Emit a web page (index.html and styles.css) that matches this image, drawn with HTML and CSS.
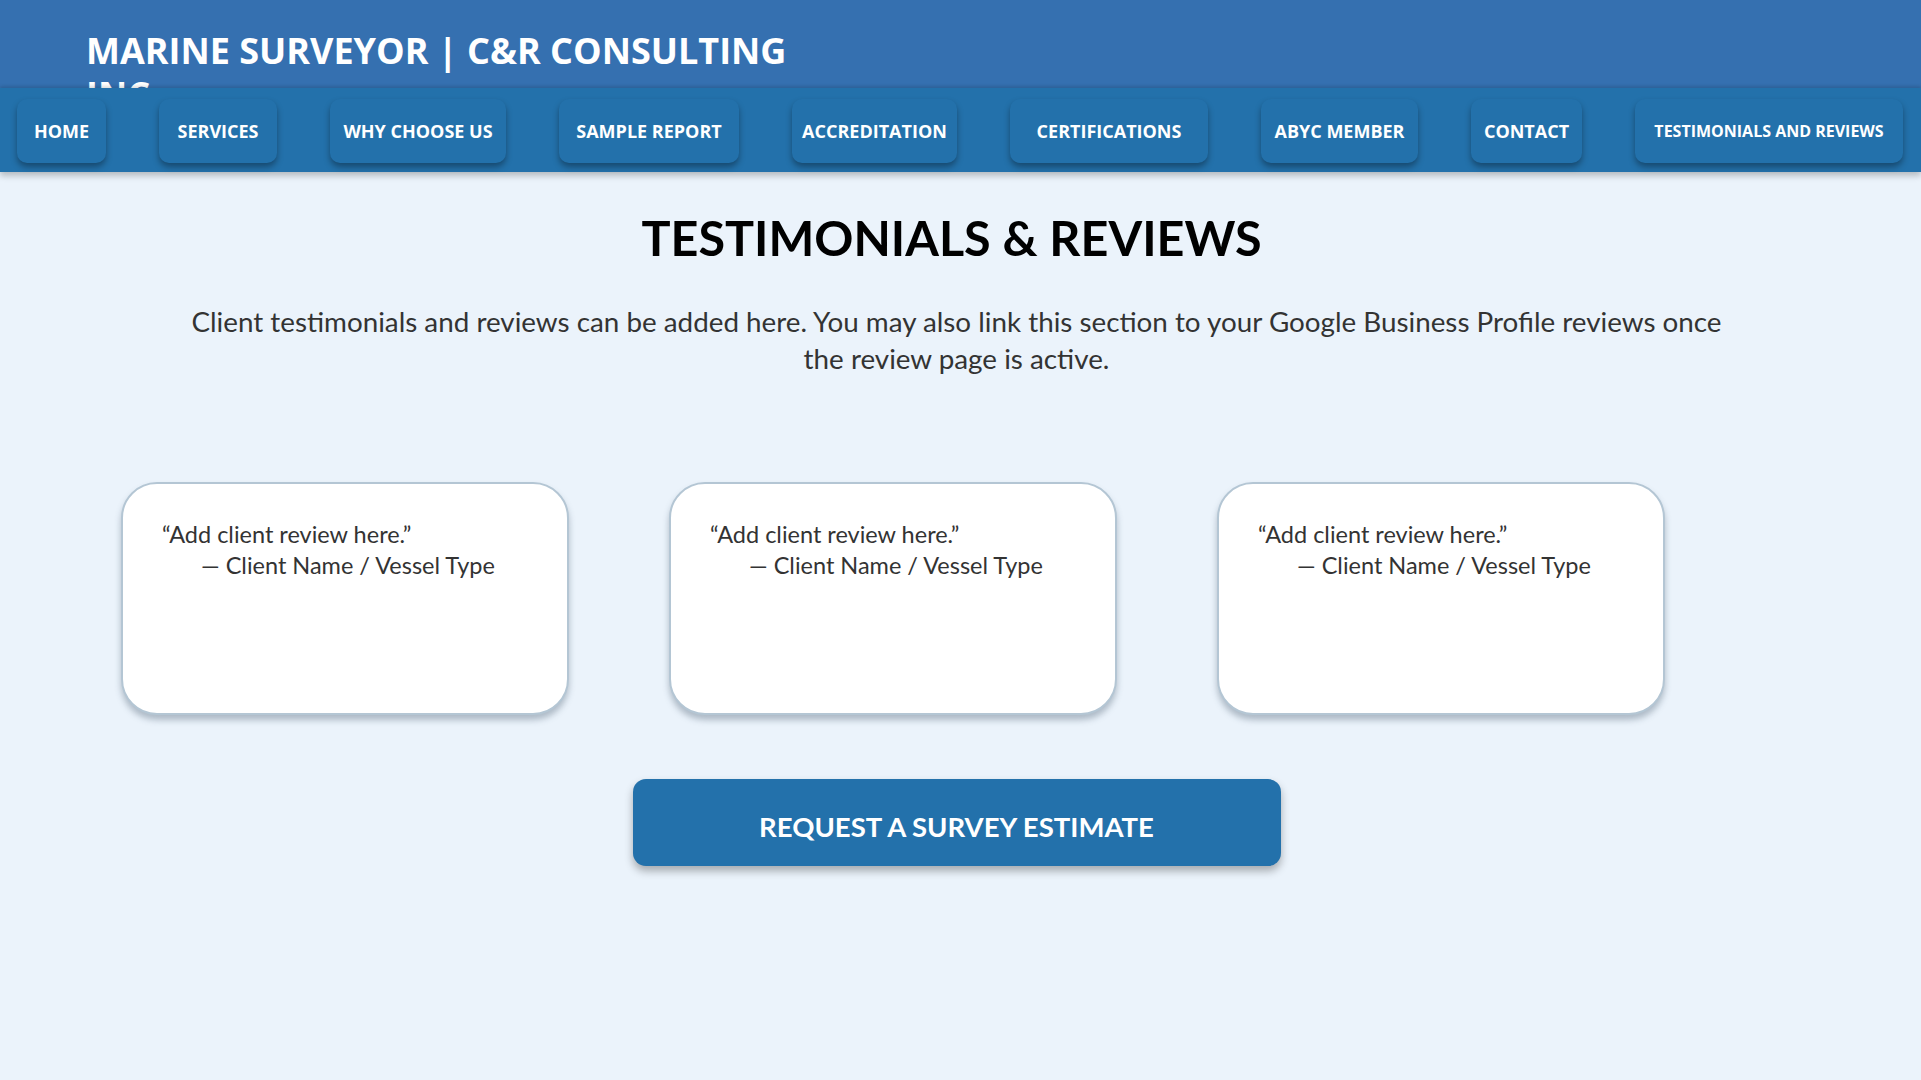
FILE: index.html
```html
<!DOCTYPE html>
<html lang="en">
<head>
<meta charset="utf-8">
<title>Testimonials &amp; Reviews</title>
<link rel="stylesheet" href="styles.css">
</head>
<body>
<header class="site-header">
  <h1 class="site-title">MARINE SURVEYOR | C&amp;R CONSULTING INC.</h1>
</header>
<nav class="main-nav">
  <a class="nav-btn" href="#">HOME</a>
  <a class="nav-btn" href="#">SERVICES</a>
  <a class="nav-btn" href="#">WHY CHOOSE US</a>
  <a class="nav-btn" href="#">SAMPLE REPORT</a>
  <a class="nav-btn" href="#">ACCREDITATION</a>
  <a class="nav-btn" href="#">CERTIFICATIONS</a>
  <a class="nav-btn" href="#">ABYC MEMBER</a>
  <a class="nav-btn" href="#">CONTACT</a>
  <a class="nav-btn nav-btn-small" href="#">TESTIMONIALS AND REVIEWS</a>
</nav>
<main class="content">
  <h2 class="page-title">TESTIMONIALS &amp; REVIEWS</h2>
  <p class="intro">Client testimonials and reviews can be added here. You may also link this section to your Google Business Profile reviews once the review page is active.</p>
  <section class="cards">
    <div class="card">
      <p class="quote">“Add client review here.”</p>
      <p class="author">— Client Name / Vessel Type</p>
    </div>
    <div class="card">
      <p class="quote">“Add client review here.”</p>
      <p class="author">— Client Name / Vessel Type</p>
    </div>
    <div class="card">
      <p class="quote">“Add client review here.”</p>
      <p class="author">— Client Name / Vessel Type</p>
    </div>
  </section>
  <div class="cta-wrap">
    <a class="cta" href="#">REQUEST A SURVEY ESTIMATE</a>
  </div>
</main>
</body>
</html>
```
FILE: styles.css
```css
* { box-sizing: border-box; }

html, body {
  margin: 0;
  padding: 0;
}

body {
  background: #ebf3fb;
  font-family: Lato, "Open Sans", "Liberation Sans", sans-serif;
  min-height: 1080px;
}

.site-header {
  background: #3570b0;
  height: 88px;
  overflow: hidden;
  padding: 29px 0 0 86px;
}

.site-title {
  margin: 0;
  width: 740px;
  font-family: "Open Sans", "Liberation Sans", sans-serif;
  font-weight: 700;
  font-size: 36px;
  line-height: 44px;
  color: #ffffff;
}

.main-nav {
  position: relative;
  background: #2371ab;
  height: 84px;
  padding: 11px 18px 9px 17px;
  display: flex;
  justify-content: space-between;
  align-items: center;
  box-shadow: 0 -2px 3px rgba(0, 0, 0, 0.12), 0 4px 6px rgba(0, 0, 0, 0.22);
}

.nav-btn {
  height: 64px;
  display: flex;
  align-items: center;
  justify-content: center;
  background: #2371ab;
  border-radius: 10px;
  box-shadow: 0 4px 6px rgba(0, 0, 0, 0.35);
  color: #ffffff;
  text-decoration: none;
  font-family: "Open Sans", "Liberation Sans", sans-serif;
  font-weight: 700;
  font-size: 18px;
  white-space: nowrap;
}

.nav-btn:nth-child(1) { width: 89px; }
.nav-btn:nth-child(2) { width: 118px; }
.nav-btn:nth-child(3) { width: 176px; }
.nav-btn:nth-child(4) { width: 180px; }
.nav-btn:nth-child(5) { width: 165px; }
.nav-btn:nth-child(6) { width: 198px; }
.nav-btn:nth-child(7) { width: 157px; }
.nav-btn:nth-child(8) { width: 111px; }
.nav-btn:nth-child(9) { width: 268px; }

.nav-btn-small {
  font-size: 16px;
}

.content {
  padding: 35px 8px 0 0;
}

.page-title {
  margin: 0;
  padding-right: 10px;
  text-align: center;
  font-family: Lato, sans-serif;
  font-weight: 700;
  font-size: 48.5px;
  line-height: 60px;
  color: #000000;
}

.intro {
  margin: 36px auto 0;
  max-width: 1545px;
  text-align: center;
  font-family: Lato, sans-serif;
  font-size: 27.8px;
  line-height: 37px;
  color: #333333;
}

.cards {
  display: flex;
  gap: 100px;
  padding-left: 121px;
  margin-top: 105px;
}

.card {
  width: 448px;
  height: 233px;
  background: #ffffff;
  border: 2px solid #b4c6d4;
  border-radius: 36px;
  box-shadow: 0 5px 6px rgba(60, 80, 100, 0.35);
  padding: 35px 20px 0 39px;
}

.quote, .author {
  margin: 0;
  font-family: Lato, sans-serif;
  font-size: 23.5px;
  line-height: 31px;
  color: #333333;
}

.author {
  padding-left: 39px;
}

.cta-wrap {
  display: flex;
  justify-content: center;
  margin-top: 64px;
}

.cta {
  width: 648px;
  height: 87px;
  display: flex;
  align-items: center;
  justify-content: center;
  padding-top: 8px;
  background: #2371ab;
  border-radius: 13px;
  box-shadow: 0 5px 8px rgba(0, 0, 0, 0.3);
  color: #ffffff;
  text-decoration: none;
  font-family: Lato, sans-serif;
  font-weight: 700;
  font-size: 27.5px;
}
```
